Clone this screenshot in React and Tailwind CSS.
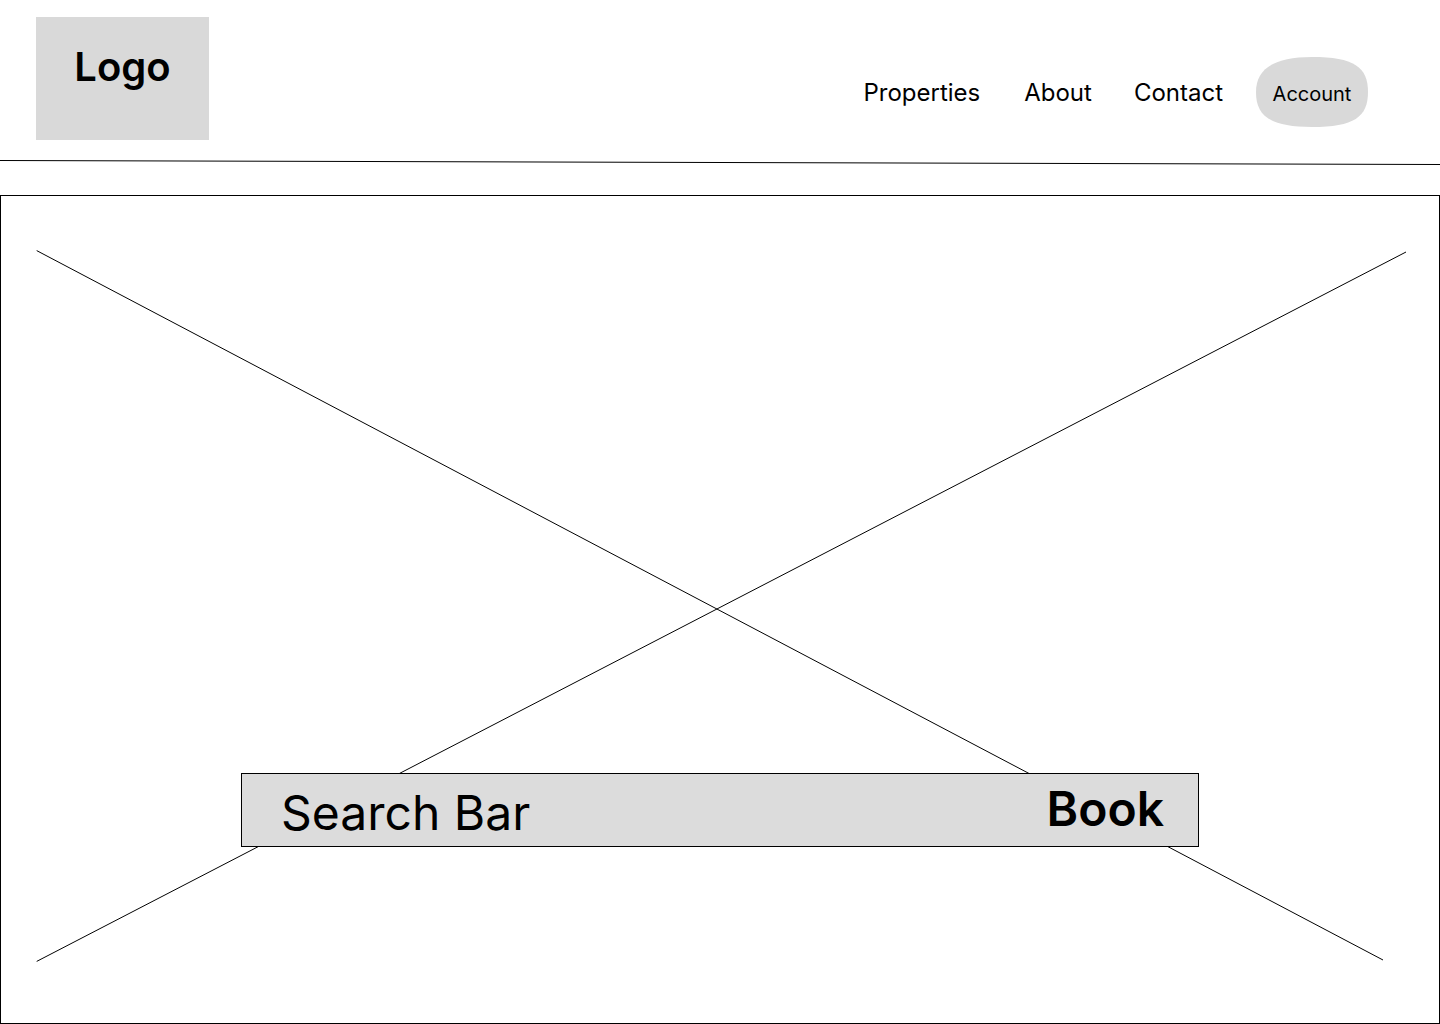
export default function App() {
  return (
    <div className="flex min-h-screen flex-col bg-white font-['Inter',sans-serif] text-black">
      <header>
        <div className="flex items-start justify-between pt-[17px] pr-[72px] pl-9">
          <a href="#" className="flex h-[123px] w-[173px] justify-center bg-[#d9d9d9] pt-[26px] text-[40px] leading-[48px] font-semibold">
            Logo
          </a>
          <nav className="flex items-center pt-10 text-2xl leading-[29px]">
            <a href="#properties" className="mr-11">Properties</a>
            <a href="#about" className="mr-[42px]">About</a>
            <a href="#contact" className="mr-[33px]">Contact</a>
            <button type="button" className="relative h-[70px] w-28 pt-1 text-xl leading-6">
              <svg viewBox="0 0 112 70" preserveAspectRatio="none" className="absolute inset-0 size-full" aria-hidden="true">
                <path d="M0 35C0 13 16 0 56 0C98 0 112 10 112 35C112 60 98 70 56 70C14 70 0 59 0 35Z" fill="#d9d9d9" />
              </svg>
              <span className="relative">Account</span>
            </button>
          </nav>
        </div>
        <svg viewBox="0 0 1440 5" preserveAspectRatio="none" className="mt-5 block h-[5px] w-full" aria-hidden="true">
          <path d="M0 .5L1440 4.5" stroke="black" />
        </svg>
      </header>
      <main className="relative mt-[30px] flex grow flex-col justify-end border border-black pb-44">
        <svg viewBox="0 0 1438 827" preserveAspectRatio="none" className="absolute inset-0 size-full" aria-hidden="true">
          <path d="M35.7 54.6L1382 764M35.7 765.4L1405 56" stroke="black" fill="none" />
        </svg>
        <form className="relative mx-60 flex h-[74px] items-start border border-black bg-[#dcdcdc] pr-[34px] pl-[39px]">
          <input
            type="text"
            aria-label="Search Bar"
            placeholder="Search Bar"
            className="mt-[10px] h-[58px] min-w-0 grow bg-transparent text-5xl leading-[58px] outline-none placeholder:text-black placeholder:opacity-100"
          />
          <button type="button" className="mt-[6px] text-5xl leading-[58px] font-semibold">Book</button>
        </form>
      </main>
    </div>
  );
}
